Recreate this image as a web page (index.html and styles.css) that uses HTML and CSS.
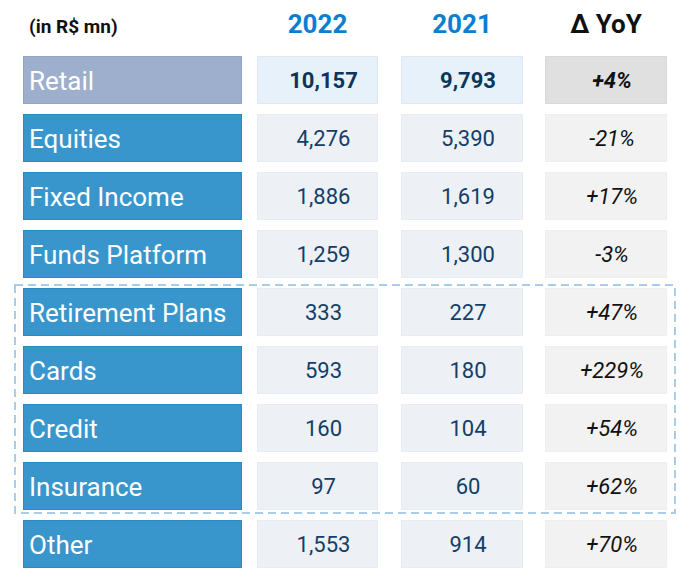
FILE: index.html
```html
<!DOCTYPE html>
<html lang="en">
<head>
<meta charset="utf-8">
<title>Retail revenues</title>
<link rel="stylesheet" href="styles.css">
</head>
<body>
<div class="page">
  <div class="table">
    <div class="h-unit">(in R$ mn)</div>
    <div class="h-year cell">2022</div>
    <div class="h-year cell">2021</div>
    <div class="h-yoy cell">Δ YoY</div>

    <div class="label label-total">Retail</div>
    <div class="cell val val-total">10,157</div>
    <div class="cell val val-total">9,793</div>
    <div class="cell yoy yoy-total">+4%</div>

    <div class="label">Equities</div>
    <div class="cell val">4,276</div>
    <div class="cell val">5,390</div>
    <div class="cell yoy">-21%</div>

    <div class="label">Fixed Income</div>
    <div class="cell val">1,886</div>
    <div class="cell val">1,619</div>
    <div class="cell yoy">+17%</div>

    <div class="label">Funds Platform</div>
    <div class="cell val">1,259</div>
    <div class="cell val">1,300</div>
    <div class="cell yoy">-3%</div>

    <div class="label">Retirement Plans</div>
    <div class="cell val">333</div>
    <div class="cell val">227</div>
    <div class="cell yoy">+47%</div>

    <div class="label">Cards</div>
    <div class="cell val">593</div>
    <div class="cell val">180</div>
    <div class="cell yoy">+229%</div>

    <div class="label">Credit</div>
    <div class="cell val">160</div>
    <div class="cell val">104</div>
    <div class="cell yoy">+54%</div>

    <div class="label">Insurance</div>
    <div class="cell val">97</div>
    <div class="cell val">60</div>
    <div class="cell yoy">+62%</div>

    <div class="label">Other</div>
    <div class="cell val">1,553</div>
    <div class="cell val">914</div>
    <div class="cell yoy">+70%</div>
  </div>
  <svg class="group-box" width="700" height="583" viewBox="0 0 700 583" aria-hidden="true">
    <rect x="15" y="285" width="660" height="228" fill="none" stroke="#a9cce9" stroke-width="2" stroke-dasharray="8 5"></rect>
  </svg>
</div>
</body>
</html>
```

FILE: styles.css
```css
html, body {
  margin: 0;
  padding: 0;
  background: #ffffff;
}

body {
  font-family: Roboto, "Liberation Sans", Arial, sans-serif;
  width: 700px;
  height: 583px;
  overflow: hidden;
}

.page {
  position: relative;
  width: 700px;
  height: 583px;
}

.table {
  display: grid;
  grid-template-columns: 219px 136px 145px 144px;
  grid-template-rows: 46px repeat(9, 48px);
  row-gap: 10px;
  padding-left: 23px;
}

.h-unit {
  align-self: baseline;
  padding-left: 6px;
  padding-top: 11px;
  font-size: 19px;
  font-weight: 700;
  color: #111111;
  line-height: 26px;
}

.h-year,
.h-yoy {
  align-self: baseline;
  padding-top: 11px;
  font-size: 26px;
  font-weight: 700;
  line-height: 26px;
  text-align: center;
}

.h-year {
  color: #0a7fd0;
}

.h-yoy {
  color: #111111;
}

.cell {
  justify-self: end;
  width: 121px;
  box-sizing: border-box;
}

.table > .cell:nth-child(4n+3),
.table > .cell:nth-child(4n+4) {
  width: 122px;
}

.label {
  box-sizing: border-box;
  width: 219px;
  height: 48px;
  background: #3996cc;
  border: 1px solid #2c89c2;
  color: #ffffff;
  font-size: 26px;
  line-height: 46px;
  padding-top: 1px;
  padding-left: 5px;
  white-space: nowrap;
}

.label-total {
  background: #9dafcc;
  border-color: #91a5c5;
}

.val,
.yoy {
  height: 48px;
  font-size: 22px;
  line-height: 46px;
  padding-top: 1px;
  text-align: center;
  padding-left: 12px;
  border: 1px solid transparent;
}

.val {
  background: #edf0f5;
  border-color: #e8ecf2;
  color: #123e69;
}

.val-total {
  background: #e7f1fa;
  border-color: #dce9f5;
  color: #0c355a;
  font-weight: 700;
}

.yoy {
  background: #f2f2f2;
  border-color: #eeeeee;
  color: #111111;
  font-style: italic;
}

.yoy-total {
  background: #e0e0e0;
  border-color: #d8d8d8;
  font-weight: 700;
}

.group-box {
  position: absolute;
  left: 0;
  top: 0;
  pointer-events: none;
}
```
